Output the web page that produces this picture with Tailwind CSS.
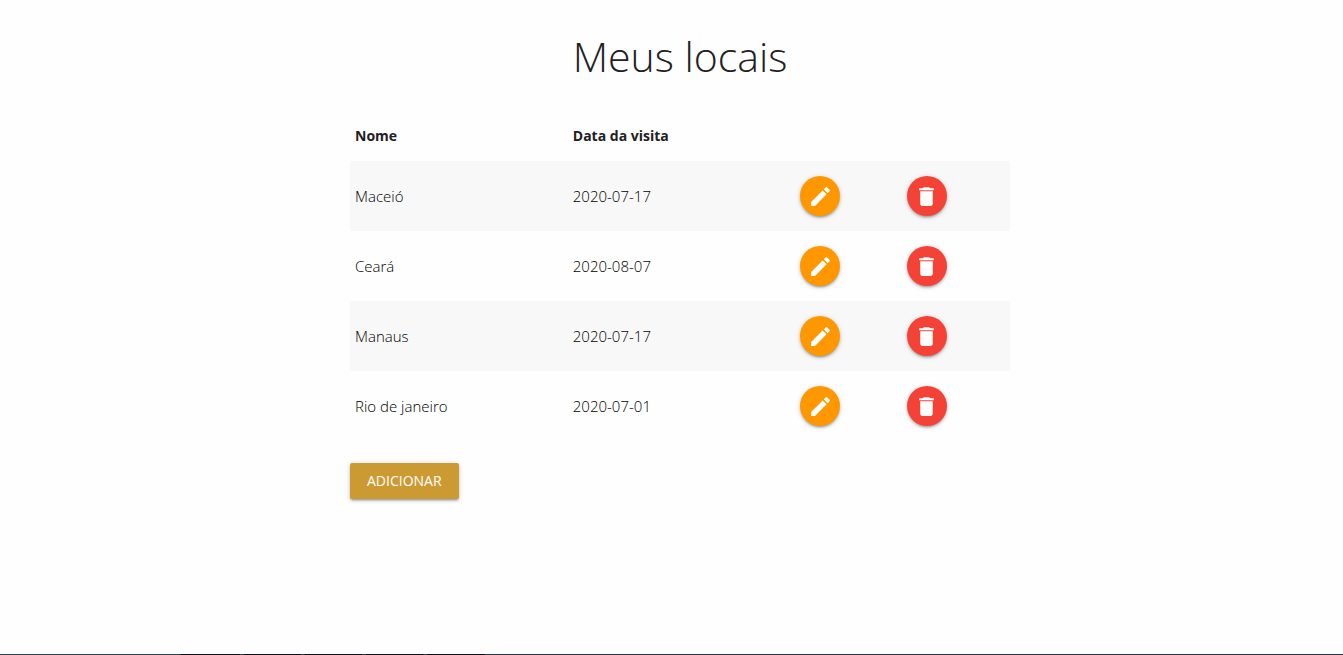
<!DOCTYPE html>
<html lang="pt-BR">
<head>
<meta charset="utf-8">
<meta name="viewport" content="width=device-width, initial-scale=1">
<title>Meus locais</title>
<script src="https://cdn.jsdelivr.net/npm/@tailwindcss/browser@4"></script>
</head>
<body class="flex min-h-screen flex-col bg-[#fefefe] font-['Open_Sans','Noto_Sans',sans-serif] text-[#212121]">
<svg class="hidden" aria-hidden="true">
  <symbol id="edit" viewBox="0 0 24 24"><path d="M3 17.25V21h3.75L17.81 9.94l-3.75-3.75L3 17.25zM20.71 7.04c.39-.39.39-1.02 0-1.41l-2.34-2.34c-.39-.39-1.02-.39-1.41 0l-1.83 1.83 3.75 3.75 1.83-1.83z"/></symbol>
  <symbol id="delete" viewBox="0 0 24 24"><path d="M6 19c0 1.1.9 2 2 2h8c1.1 0 2-.9 2-2V7H6v12zM19 4h-3.500l-1-1h-5l-1 1H5v2h14V4z"/></symbol>
</svg>
<main class="grow pl-[17px]">
  <div class="mx-auto max-w-[660px]">
    <h1 class="pt-6 text-center text-[41px] leading-[64px] font-light">Meus locais</h1>
    <table class="mt-[22px] w-full table-fixed text-left text-[15px]">
      <colgroup><col class="w-[33%]"><col class="w-[34.5%]"><col class="w-[16.1%]"><col></colgroup>
      <thead>
        <tr class="h-[51px] text-sm"><th class="px-[5px] font-bold">Nome</th><th class="px-[5px] font-bold">Data da visita</th><td></td><td></td></tr>
      </thead>
      <tbody class="font-light text-black">
        <tr class="h-[70px] odd:bg-[#f8f8f8]">
          <td class="px-[5px]">Maceió</td><td class="px-[5px]">2020-07-17</td>
          <td class="px-[5px]"><button type="button" aria-label="Editar Maceió" class="grid size-10 place-items-center rounded-full bg-[#ff9800] text-white shadow-[0_2px_2px_0_rgba(0,0,0,0.14),0_3px_1px_-2px_rgba(0,0,0,0.12),0_1px_5px_0_rgba(0,0,0,0.2)]"><svg class="size-[25px] fill-current"><use href="#edit"/></svg></button></td>
          <td class="px-[5px]"><button type="button" aria-label="Excluir Maceió" class="grid size-10 place-items-center rounded-full bg-[#f44336] text-white shadow-[0_2px_2px_0_rgba(0,0,0,0.14),0_3px_1px_-2px_rgba(0,0,0,0.12),0_1px_5px_0_rgba(0,0,0,0.2)]"><svg class="size-[25px] fill-current"><use href="#delete"/></svg></button></td>
        </tr>
        <tr class="h-[70px] odd:bg-[#f8f8f8]">
          <td class="px-[5px]">Ceará</td><td class="px-[5px]">2020-08-07</td>
          <td class="px-[5px]"><button type="button" aria-label="Editar Ceará" class="grid size-10 place-items-center rounded-full bg-[#ff9800] text-white shadow-[0_2px_2px_0_rgba(0,0,0,0.14),0_3px_1px_-2px_rgba(0,0,0,0.12),0_1px_5px_0_rgba(0,0,0,0.2)]"><svg class="size-[25px] fill-current"><use href="#edit"/></svg></button></td>
          <td class="px-[5px]"><button type="button" aria-label="Excluir Ceará" class="grid size-10 place-items-center rounded-full bg-[#f44336] text-white shadow-[0_2px_2px_0_rgba(0,0,0,0.14),0_3px_1px_-2px_rgba(0,0,0,0.12),0_1px_5px_0_rgba(0,0,0,0.2)]"><svg class="size-[25px] fill-current"><use href="#delete"/></svg></button></td>
        </tr>
        <tr class="h-[70px] odd:bg-[#f8f8f8]">
          <td class="px-[5px]">Manaus</td><td class="px-[5px]">2020-07-17</td>
          <td class="px-[5px]"><button type="button" aria-label="Editar Manaus" class="grid size-10 place-items-center rounded-full bg-[#ff9800] text-white shadow-[0_2px_2px_0_rgba(0,0,0,0.14),0_3px_1px_-2px_rgba(0,0,0,0.12),0_1px_5px_0_rgba(0,0,0,0.2)]"><svg class="size-[25px] fill-current"><use href="#edit"/></svg></button></td>
          <td class="px-[5px]"><button type="button" aria-label="Excluir Manaus" class="grid size-10 place-items-center rounded-full bg-[#f44336] text-white shadow-[0_2px_2px_0_rgba(0,0,0,0.14),0_3px_1px_-2px_rgba(0,0,0,0.12),0_1px_5px_0_rgba(0,0,0,0.2)]"><svg class="size-[25px] fill-current"><use href="#delete"/></svg></button></td>
        </tr>
        <tr class="h-[70px] odd:bg-[#f8f8f8]">
          <td class="px-[5px]">Rio de janeiro</td><td class="px-[5px]">2020-07-01</td>
          <td class="px-[5px]"><button type="button" aria-label="Editar Rio de janeiro" class="grid size-10 place-items-center rounded-full bg-[#ff9800] text-white shadow-[0_2px_2px_0_rgba(0,0,0,0.14),0_3px_1px_-2px_rgba(0,0,0,0.12),0_1px_5px_0_rgba(0,0,0,0.2)]"><svg class="size-[25px] fill-current"><use href="#edit"/></svg></button></td>
          <td class="px-[5px]"><button type="button" aria-label="Excluir Rio de janeiro" class="grid size-10 place-items-center rounded-full bg-[#f44336] text-white shadow-[0_2px_2px_0_rgba(0,0,0,0.14),0_3px_1px_-2px_rgba(0,0,0,0.12),0_1px_5px_0_rgba(0,0,0,0.2)]"><svg class="size-[25px] fill-current"><use href="#delete"/></svg></button></td>
        </tr>
      </tbody>
    </table>
    <button type="button" class="mt-[22px] h-9 rounded-xs bg-[#cc9a33] px-[17px] text-sm text-white shadow-[0_2px_2px_0_rgba(0,0,0,0.14),0_3px_1px_-2px_rgba(0,0,0,0.12),0_1px_5px_0_rgba(0,0,0,0.2)]">ADICIONAR</button>
  </div>
</main>
<footer class="flex h-px bg-[#2b3745]"><div class="w-[181px] bg-[#2f4250]"></div><div class="mr-1 w-[59px] bg-[#120c14]"></div><div class="mr-1 w-[57px] bg-[#120c14]"></div><div class="mr-1 w-[57px] bg-[#120c14]"></div><div class="w-[57px] bg-[#120c14]"></div><div class="ml-1 w-[58px] bg-[#120c14]"></div></footer>
</body>
</html>
